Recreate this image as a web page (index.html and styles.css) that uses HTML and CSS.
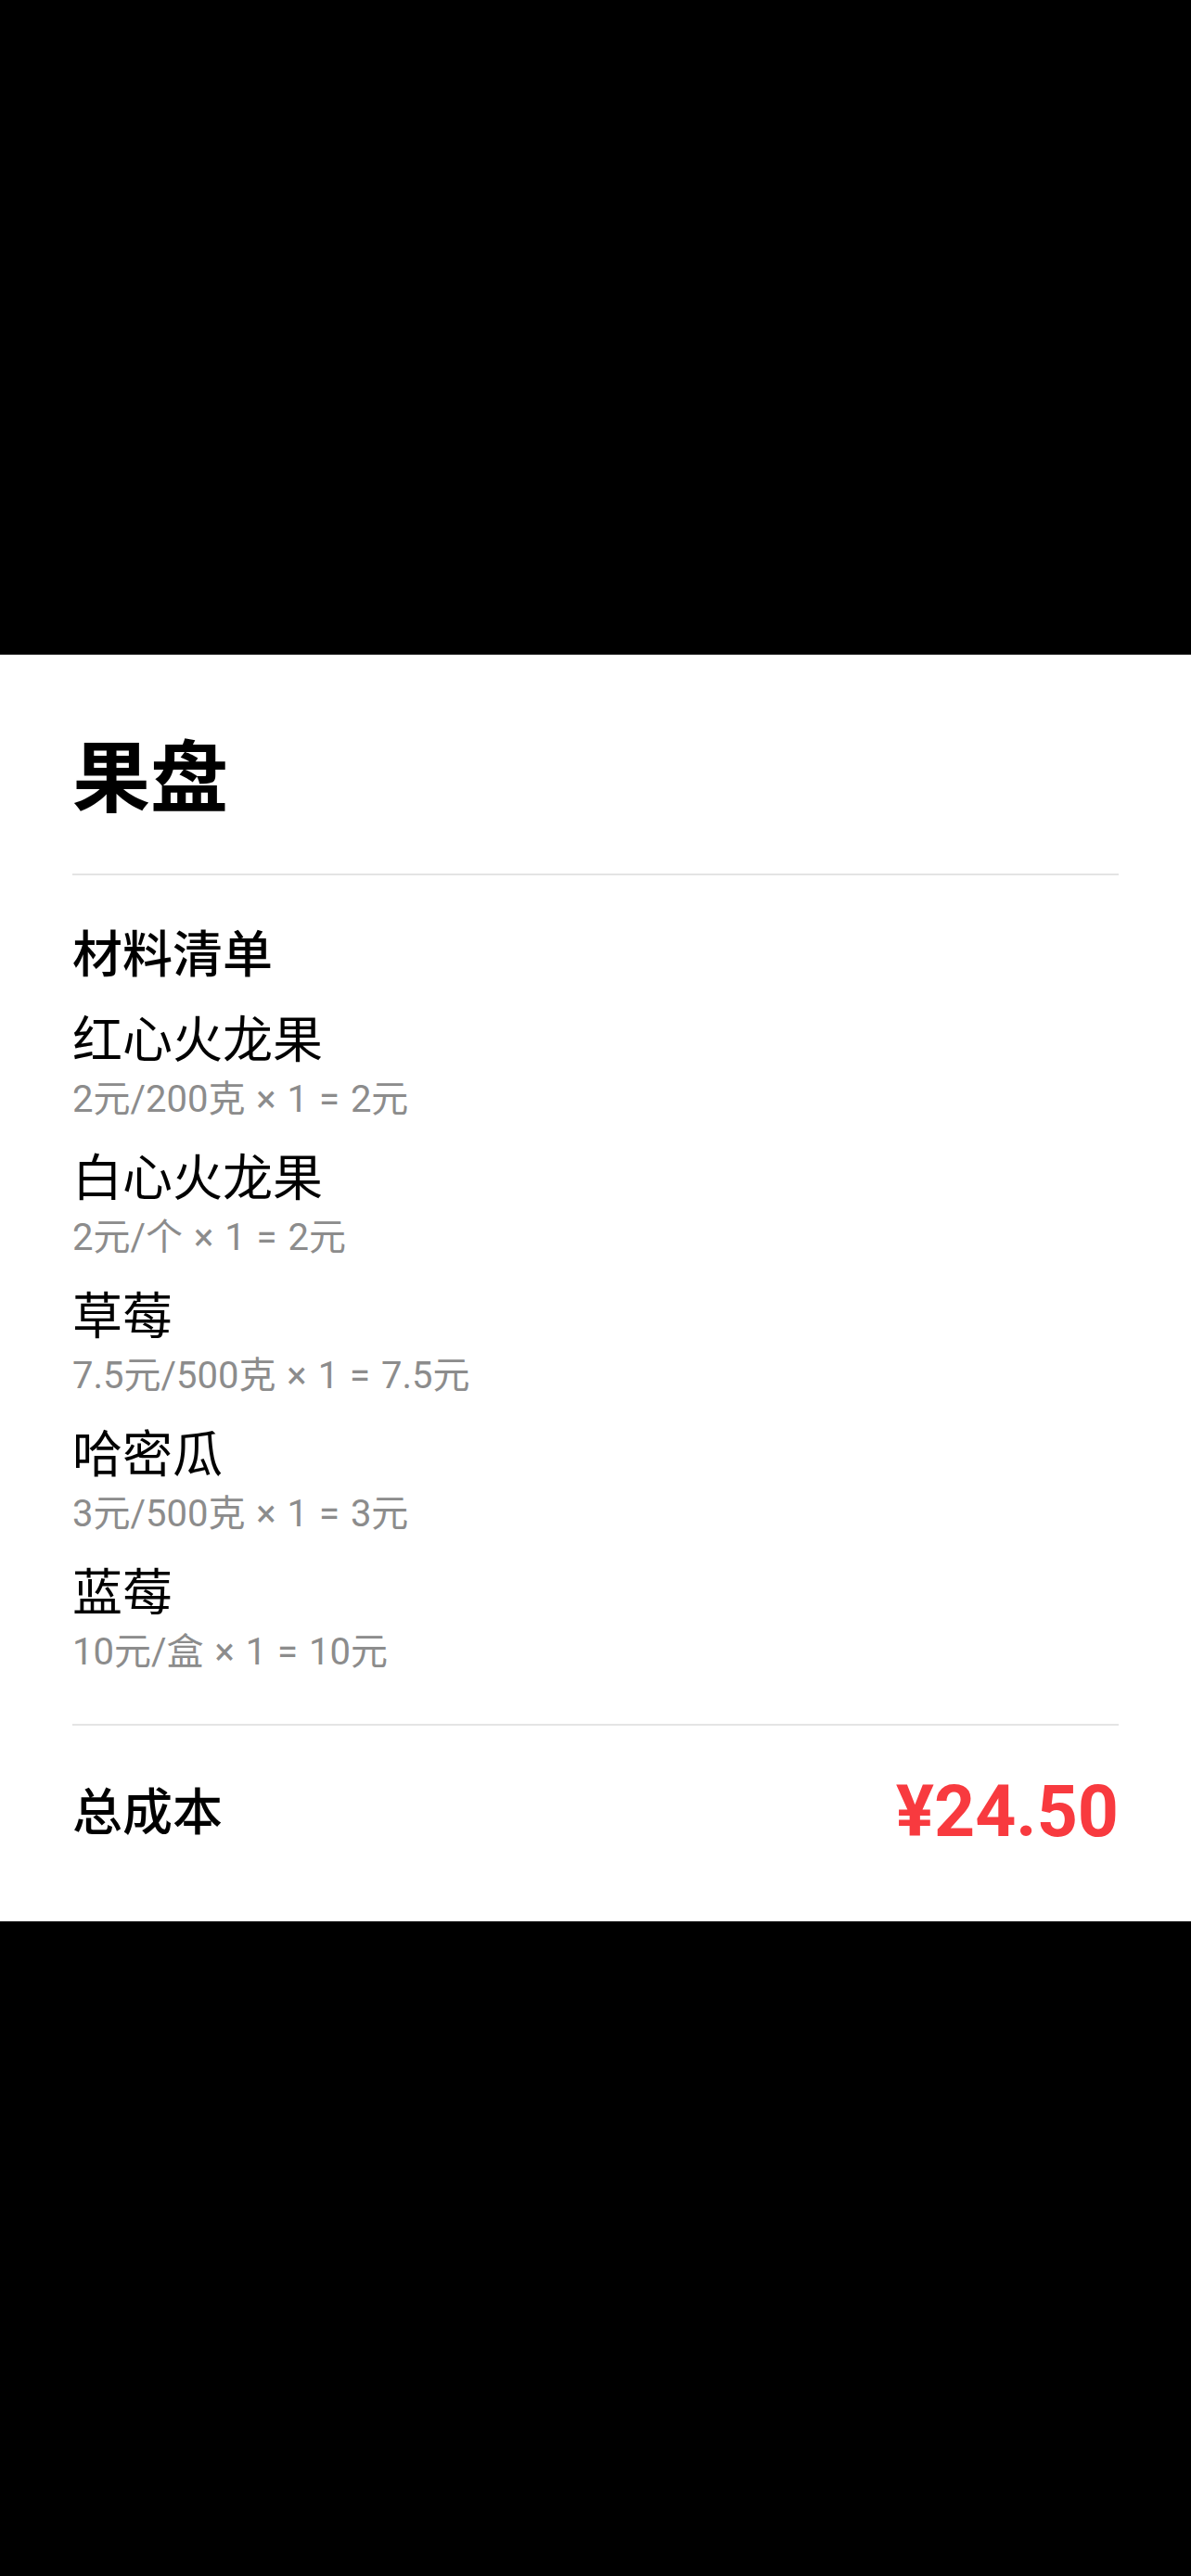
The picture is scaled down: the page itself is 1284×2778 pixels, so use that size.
FILE: index.html
```html
<!DOCTYPE html>
<html lang="zh-CN">
<head>
  <meta charset="UTF-8" />
  <meta name="viewport" content="width=device-width, initial-scale=1.0" />
  <title>果盘</title>
  <link rel="stylesheet" href="styles.css">
</head>
<body>
  <div class="card">
    <header class="card-head">
      <h1>果盘</h1>
    </header>
    <section class="materials">
      <h2>材料清单</h2>
      <ul class="items">
        <li class="item">
          <div class="name">红心火龙果</div>
          <div class="calc">2元/200克 × 1 = 2元</div>
        </li>
        <li class="item">
          <div class="name">白心火龙果</div>
          <div class="calc">2元/个 × 1 = 2元</div>
        </li>
        <li class="item">
          <div class="name">草莓</div>
          <div class="calc">7.5元/500克 × 1 = 7.5元</div>
        </li>
        <li class="item">
          <div class="name">哈密瓜</div>
          <div class="calc">3元/500克 × 1 = 3元</div>
        </li>
        <li class="item">
          <div class="name">蓝莓</div>
          <div class="calc">10元/盒 × 1 = 10元</div>
        </li>
      </ul>
    </section>
    <footer class="total">
      <span class="total-label">总成本</span>
      <span class="total-price">¥24.50</span>
    </footer>
  </div>
</body>
</html>
```

FILE: styles.css
```css
body {
  margin: 0;
  padding: 0;
  background: #000;
  min-height: 100vh;
  display: flex;
  flex-direction: column;
  justify-content: center;
  font-family: "Noto Sans CJK SC", sans-serif;
  color: #000;
}
.card {
  background: #fff;
  padding: 74px 78px 0;
}
.card-head {
  padding-bottom: 56px;
  border-bottom: 2px solid #e4e4e4;
}
h1 {
  margin: 0;
  font-size: 84px;
  line-height: 106px;
  font-weight: 700;
}
.materials {
  padding: 50px 0 52px;
}
h2 {
  margin: 0;
  font-size: 54px;
  line-height: 64px;
  font-weight: 500;
}
.items {
  list-style: none;
  margin: 28px 0 0;
  padding: 0;
  display: flex;
  flex-direction: column;
  gap: 24px;
}
.name {
  font-size: 54px;
  line-height: 64px;
  font-weight: 400;
}
.calc {
  margin-top: 11px;
  font-family: Roboto, "Noto Sans CJK SC", sans-serif;
  font-size: 40px;
  line-height: 50px;
  word-spacing: 2px;
  color: #8c8c8c;
}
.total {
  border-top: 2px solid #e4e4e4;
  padding: 43px 0 68px;
  display: flex;
  justify-content: space-between;
  align-items: center;
}
.total-label {
  font-size: 54px;
  line-height: 64px;
  font-weight: 500;
  margin-bottom: 6px;
}
.total-price {
  font-family: Roboto, "Liberation Sans", sans-serif;
  font-size: 77px;
  line-height: 100px;
  font-weight: 700;
  color: #f83a3f;
}
```
